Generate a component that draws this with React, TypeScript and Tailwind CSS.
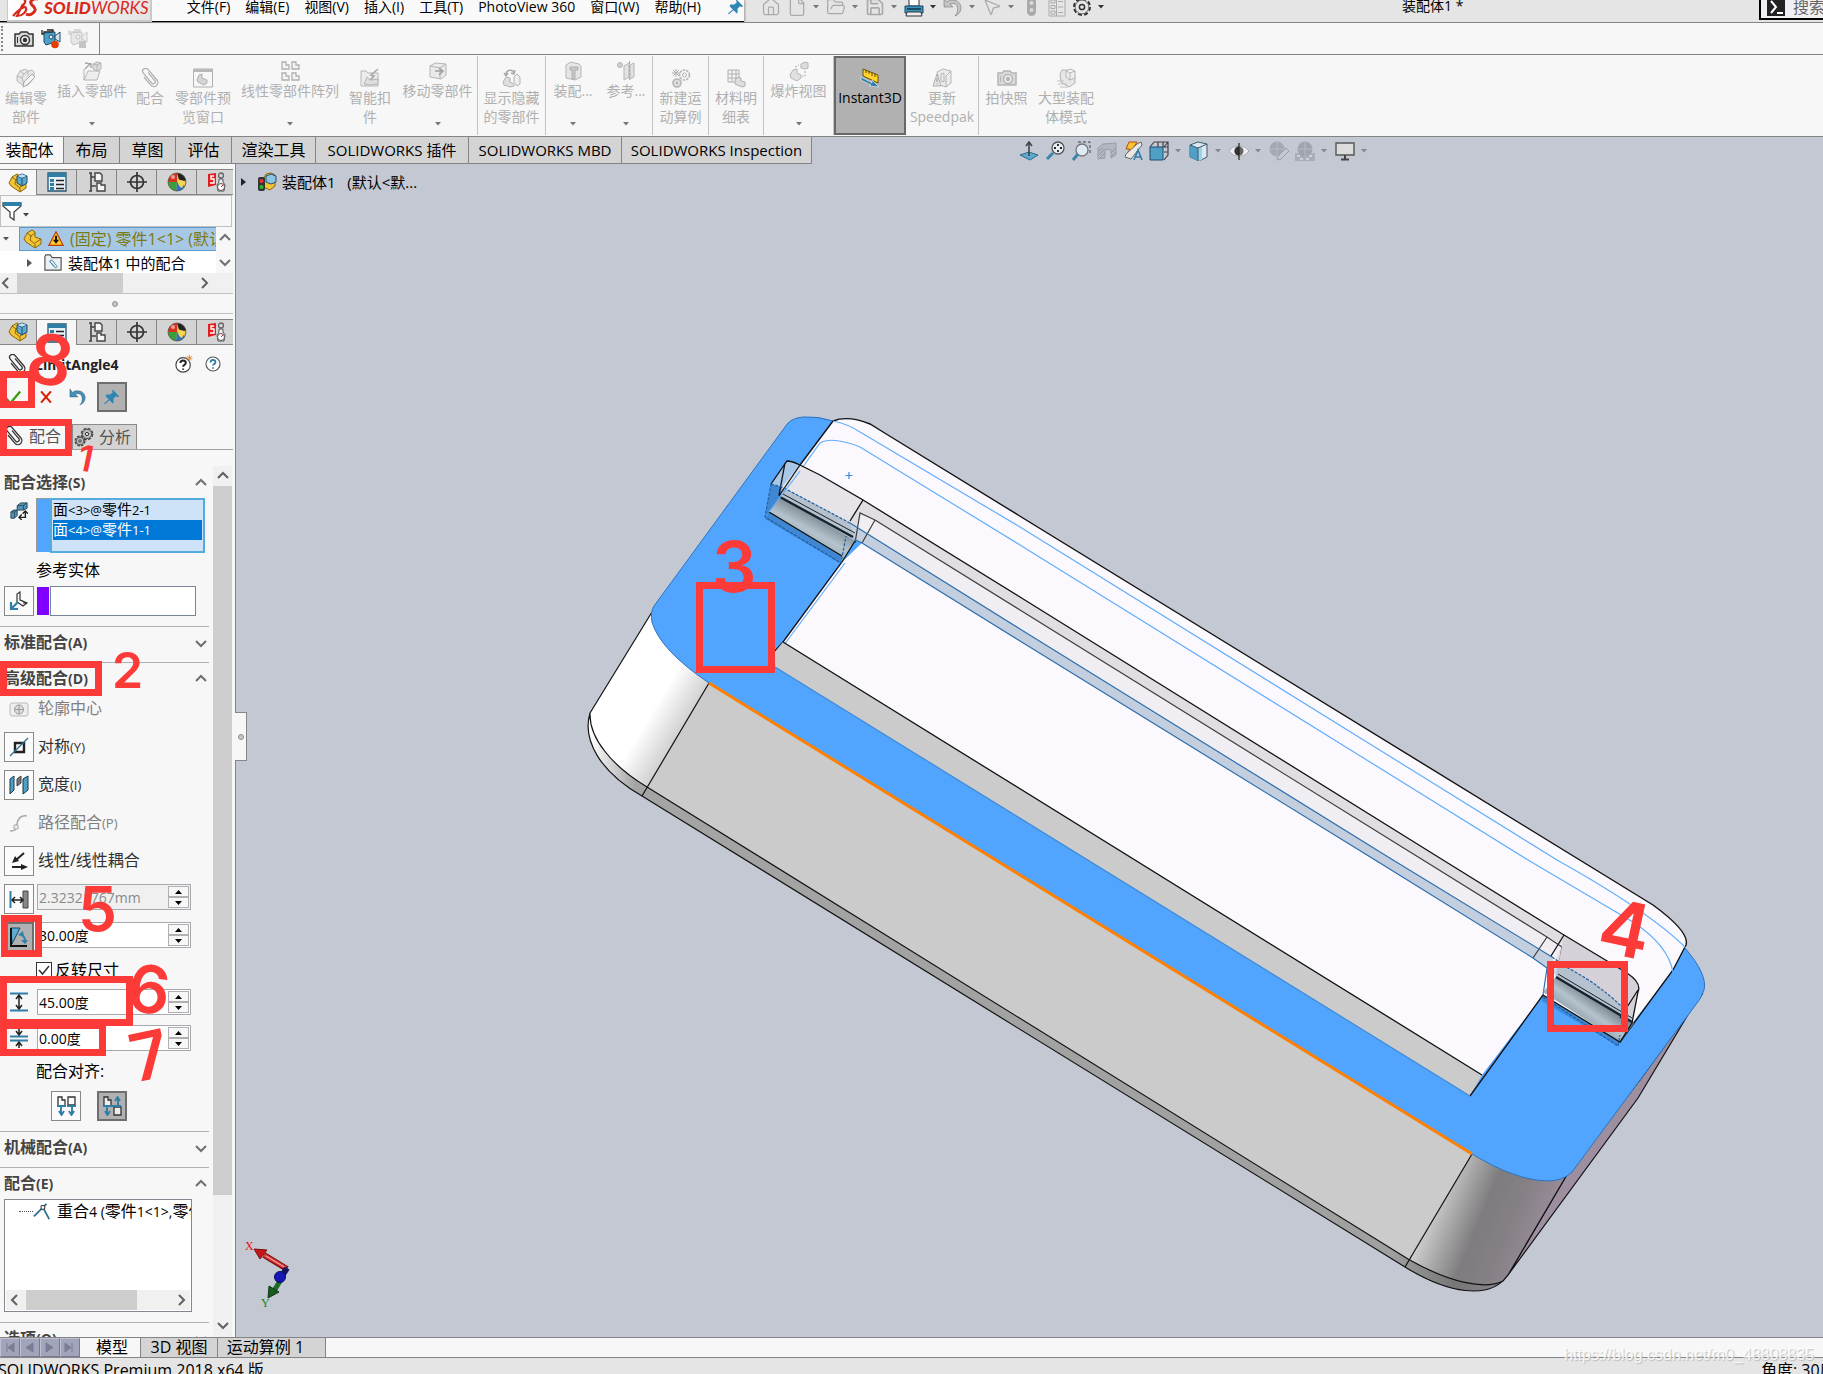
import React from 'react';
import { Home, File, FolderOpen, Save, MousePointer2 } from 'lucide-react';

type IconProps = { className?: string };

const Svg: React.FC<{ className?: string; children: React.ReactNode }> = ({ className = 'w-5 h-5', children }) => (
  <svg viewBox="0 0 20 20" className={`${className} shrink-0`} fill="none" aria-hidden="true">{children}</svg>
);

/* ---------- icons ---------- */

const Caret: React.FC<IconProps> = ({ className = 'text-[#888]' }) => (
  <svg viewBox="0 0 6 4" className={`w-[6px] h-[4px] shrink-0 ${className}`} aria-hidden="true"><path d="M0 0h6L3 3.5z" fill="currentColor" /></svg>
);

const Chevron: React.FC<{ dir: 'up' | 'down' | 'left' | 'right'; className?: string }> = ({ dir, className = 'text-[#707070]' }) => {
  const d = { up: 'M1 8l5-5 5 5', down: 'M1 4l5 5 5-5', left: 'M8 1L3 6l5 5', right: 'M4 1l5 5-5 5' }[dir];
  return <svg viewBox="0 0 12 12" className={`w-3 h-3 shrink-0 ${className}`} aria-hidden="true"><path d={d} stroke="currentColor" strokeWidth="2" fill="none" /></svg>;
};

const Clip: React.FC<IconProps> = ({ className }) => (
  <Svg className={className}>
    <g transform="rotate(-40 10 10)">
      <path d="M6 6v10a4 4 0 0 0 8 0V2a3 3 0 0 0-6 0v13a2 2 0 0 0 4 0V5" stroke="currentColor" strokeWidth="1.3" strokeLinecap="round" />
    </g>
  </Svg>
);

const YellowPart: React.FC<IconProps & { blue?: boolean }> = ({ className, blue }) => (
  <Svg className={className}>
    <path d="M1 10l3-6 5-3 3 2v5l6 2v5l-6 4-9-6z" fill="#f3c434" stroke="#8a6510" />
    <path d="M4 4l4 3-1 4 5 4v4M12 14l6-4M8 7l4-3" stroke="#8a6510" />
    {blue && <><path d="M9 3l5-2 5 2v7l-5 3-5-3z" fill="#5fa8cf" stroke="#1f4f6e" /><path d="M9 3l5 2 5-2M14 5v8" stroke="#1f4f6e" /><path d="M9.5 3L14 1.3 18.500 3 14 4.7z" fill="#c2e2f2" /></>}
  </Svg>
);

const Camera: React.FC<IconProps> = ({ className }) => (
  <Svg className={className}>
    <path d="M1 5h4l2-2h6l2 2h4v12H1z" fill="#d9d9d9" stroke="currentColor" strokeWidth="1.5" />
    <circle cx="11" cy="11" r="4.5" fill="#eee" stroke="currentColor" strokeWidth="1.5" />
    <circle cx="11" cy="11" r="2.2" fill="currentColor" />
    <path d="M3.5 8v6" stroke="currentColor" />
  </Svg>
);

const VideoCam: React.FC<{ live?: boolean }> = ({ live }) => (
  <Svg>
    <path d="M1 1v4h2V3h9V1H6" stroke={live ? '#222' : '#ccc'} strokeWidth="1.3" />
    <path d="M3 4l11-1v10l-9 3-2-3z" fill={live ? '#4c9fc8' : '#e6e6e6'} stroke={live ? '#1c4a63' : '#c8c8c8'} />
    <path d="M14 7l5-4v10l-5-3z" fill={live ? '#cfe3ee' : '#eee'} stroke={live ? '#1c4a63' : '#c8c8c8'} />
    <circle cx="10" cy="8" r="2" fill={live ? '#e6f2f8' : '#f4f4f4'} stroke={live ? '#1c4a63' : '#c0c0c0'} />
    {live ? <circle cx="14" cy="15.5" r="3.8" fill="#e63c00" /> : <path d="M11 12h7v7h-7z" fill="#c4c4c4" />}
  </Svg>
);

const InsertPart: React.FC = () => (
  <Svg>
    <path d="M2 8v11h13l3-9H6l-4 9" fill="#eee" stroke="#b5b5b5" />
    <path d="M3 2l6 1M3 8l5-5M9 2v5" stroke="#a5a5a5" strokeWidth="1.4" />
    <path d="M11 3l4-2 4 1v6l-4 2-4-2z" fill="#dcdcdc" stroke="#b5b5b5" /><path d="M11 3l4 1 4-2M15 4v6" stroke="#b5b5b5" />
  </Svg>
);

const EditPart: React.FC = () => (
  <Svg>
    <path d="M1 8l3-5 5-2 3 2 4-1 2 2v6l-6 7-4 1-7-5z" fill="#e6e6e6" stroke="#b8b8b8" />
    <path d="M1 8l5 2 2 7M4 3l4 3-2 4M12 3v5M8 6l4-3" stroke="#b8b8b8" />
    <path d="M7 19l1-5 8-8 3 3-8 8z" fill="#f4f4f4" stroke="#a8a8a8" />
  </Svg>
);

const PreviewWin: React.FC = () => (
  <Svg>
    <path d="M.5 1h19v18H.5z" stroke="#b0b0b0" /><path d="M.5 1h19v3H.5z" fill="#b8b8b8" />
    <path d="M4 12l2-5 3-1v4l5 2v3l-3 2-6-3z" fill="#d5d5d5" stroke="#b0b0b0" />
  </Svg>
);

const Pattern: React.FC = () => (
  <Svg>
    {['M2 1h4v3h3v4H2z', 'M12 1h4v3h3v4h-7z', 'M2 12h4v3h3v4H2z', 'M12 12h4v3h3v4h-7z'].map((d) => <path key={d} d={d} fill="#f4f4f4" stroke="#b0b0b0" strokeWidth="1.3" />)}
  </Svg>
);

const SmartFastener: React.FC = () => (
  <Svg>
    <path d="M1 3h5l2 2h10v13H1z" fill="#ececec" stroke="#b5b5b5" /><path d="M18 1l-7 6 3 1-6 6" stroke="#a8a8a8" strokeWidth="1.6" /><path d="M4 16l3-7 3 3 8-1v5l-8 1z" fill="#ddd" stroke="#b5b5b5" />
  </Svg>
);

const MovePart: React.FC = () => (
  <Svg>
    <path d="M2 5l5-3 11 1v11l-5 4-11-2z" fill="#eaeaea" stroke="#b5b5b5" /><path d="M2 5l10 2v11M12 7l6-4" stroke="#b5b5b5" /><path d="M7 10h7M11 7l4 3-4 4" stroke="#a0a0a0" strokeWidth="1.5" />
  </Svg>
);

const ShowHidden: React.FC = () => (
  <Svg>
    <path d="M4 7c0-6 7-6 8-2M9 5l3 1 1-4M4 8L2 5M4 8l2-3" stroke="#a8a8a8" strokeWidth="1.4" />
    <path d="M1 14l3-5 4 1v4l4 2v2l-4 1-6-2z" fill="#ddd" stroke="#b5b5b5" /><path d="M12 9l3-3 3 3v7l-3 2-3-4z" fill="#eee" stroke="#b5b5b5" />
  </Svg>
);

const Feature: React.FC = () => (
  <Svg>
    <path d="M3 4l5-3 8 2 2 2v11l-6 3-9-2z" fill="#e6e6e6" stroke="#b5b5b5" /><path d="M7 6h8v3h-3v9H9V9H7z" fill="#c6c6c6" stroke="#b0b0b0" />
  </Svg>
);

const RefGeom: React.FC = () => (
  <Svg>
    <circle cx="4" cy="4" r="2.5" fill="#d0d0d0" stroke="#b5b5b5" /><path d="M8 5l5-3v14l-5 3zM14 4l4-2v14l-4 2z" fill="#e2e2e2" stroke="#b5b5b5" /><path d="M13.5 0v20" stroke="#aaa" strokeDasharray="3 1" />
  </Svg>
);

const Motion: React.FC = () => (
  <Svg>
    <path d="M5 1v8M1 5h8M2 2l6 6M8 2L2 8" stroke="#b0b0b0" /><circle cx="13.5" cy="7" r="5" stroke="#b5b5b5" strokeWidth="1.6" strokeDasharray="2.5 1" fill="#f4f4f4" /><circle cx="13.5" cy="7" r="2" stroke="#b5b5b5" />
    <circle cx="6" cy="15" r="4" stroke="#b5b5b5" strokeWidth="1.6" fill="#ddd" /><circle cx="6" cy="15" r="1.2" fill="#b5b5b5" />
  </Svg>
);

const Bom: React.FC = () => (
  <Svg>
    <path d="M2 2h11v12H2zM2 6h11M2 10h11M6 2v12M10 2v12" fill="#f4f4f4" stroke="#b0b0b0" /><path d="M9 12l3-3 3 1v3l4 1v4l-3 1-7-3z" fill="#ddd" stroke="#b0b0b0" />
  </Svg>
);

const Explode: React.FC = () => (
  <Svg>
    <path d="M1 14l3-5 4-1v4l4 2v3l-4 3-6-3z" fill="#e0e0e0" stroke="#b5b5b5" /><path d="M12 3l4-2 3 1v5l-3 1-4-1z" fill="#ddd" stroke="#b5b5b5" /><path d="M16 10v5h-3M6 6l4-2" stroke="#a5a5a5" strokeDasharray="2 1.5" />
  </Svg>
);

const Ruler3D: React.FC = () => (
  <Svg>
    <path d="M3 1l15 6v8L3 8z" fill="#ffd52e" stroke="#6b5000" /><path d="M6 2v3M9 3v3M12 4.5V8M15 6v3" stroke="#5a4400" />
    <path d="M1 9l11 6v-3l7 7-10-1 2-1L1 12z" fill="#2f7fa8" stroke="#e8f4fa" strokeWidth=".6" />
  </Svg>
);

const Speedpak: React.FC = () => (
  <Svg>
    <path d="M5 4l6-3 8 2v12l-5 4-6-2z" fill="#ececec" stroke="#b5b5b5" /><path d="M9 6l3-1v9l-3-1zM14 8v11M14 8l5-5" stroke="#b5b5b5" /><path d="M1 18l4-12 4 12z" fill="#e5e5e5" stroke="#b0b0b0" /><path d="M5 10v4M5 15.5v1" stroke="#999" />
  </Svg>
);

const LargeAsm: React.FC = () => (
  <Svg>
    <path d="M4 6l2-4h5v6l3 2 5-2v7l-6 4-8-5z" fill="#e6e6e6" stroke="#b5b5b5" /><path d="M10 3l4-2 5 2v7l-5 2-4-3zM10 3l4 2 5-2M14 5v7" fill="#eee" stroke="#b5b5b5" /><path d="M1 13h7M2 16h9M4 19h8" stroke="#c0c0c0" />
  </Svg>
);

const Pin: React.FC<IconProps> = ({ className }) => (
  <Svg className={className}><path d="M11 1l8 8-2 1-2-1-3 3v5l-1 1-4-4-6 5-1-1 6-5-4-4 1-2h5l3-3-1-2z" fill="#2f86b5" /></Svg>
);

const Undo: React.FC<IconProps> = ({ className }) => (
  <Svg className={className}><path d="M1 1v9h9L7 7c6-2 9 2 7 9l-2 3c9-3 8-17-4-16-2 0-3 1-4 2z" fill="currentColor" stroke="#00000055" strokeWidth=".8" /></Svg>
);

const Printer: React.FC = () => (
  <Svg><path d="M5 0h10v9H5z" fill="#fff" stroke="#333" /><path d="M1 9h18v7H1z" fill="#3d94bf" stroke="#15465f" /><path d="M3 15h14l1 4H2z" fill="#eee" stroke="#333" /><path d="M3 12h14" stroke="#0f3448" strokeWidth="1.5" /></Svg>
);

const Lights: React.FC = () => (
  <Svg><rect x="6" y="0" width="9" height="19" rx="4.5" fill="#a9a9a9" /><circle cx="10.5" cy="6" r="2" fill="#d9d9d9" /><circle cx="10.5" cy="13" r="2" fill="#d9d9d9" /></Svg>
);

const ListIcon: React.FC = () => (
  <Svg><path d="M2 0h16v19H2z" stroke="#aaa" /><path d="M4 3h4v3H4zM4 8.5h4v3H4zM4 14h4v3H4zM11 4.5h5M11 10h5M11 15.5h5M9.5 0v19" stroke="#aaa" /></Svg>
);

const Gear: React.FC = () => (
  <Svg><circle cx="10" cy="10" r="8" stroke="#333" strokeWidth="2" strokeDasharray="4 2.28" /><circle cx="10" cy="10" r="6.8" fill="#e5e5e5" stroke="#444" strokeWidth=".7" /><circle cx="10" cy="10" r="2.6" stroke="#333" strokeWidth="1.5" /></Svg>
);

const Gears: React.FC = () => (
  <Svg>
    <circle cx="13" cy="7" r="5.6" stroke="#444" strokeWidth="1.4" strokeDasharray="3 1.4" /><circle cx="13" cy="7" r="4.6" fill="#bbb" stroke="#555" /><circle cx="13" cy="7" r="1.6" fill="#eee" stroke="#333" />
    <circle cx="6" cy="14" r="4.8" stroke="#444" strokeWidth="1.4" strokeDasharray="2.6 1.2" /><circle cx="6" cy="14" r="3.8" fill="#bbb" stroke="#555" /><circle cx="6" cy="14" r="1.2" fill="#eee" stroke="#333" />
  </Svg>
);

const panelIcons = [
  <YellowPart key="fm" blue />,
  <Svg key="pm"><path d="M1 1h18v18H1z" fill="#e8f1f6" stroke="#24566f" strokeWidth="1.3" /><path d="M1 1h18v4H1z" fill="#2f7ea6" /><path d="M3 7h4v3H3zM3 11h4v3H3zM3 15h4v3H3z" fill="#2f7ea6" /><path d="M9 8.5h8M9 12.5h8M9 16.5h8" stroke="#222" strokeWidth="1.4" /></Svg>,
  <Svg key="cm"><path d="M2 1h3M4 1v18M2 19h3M4 5h5M4 14h5" stroke="#444" strokeWidth="1.6" /><path d="M8 1h5l2 2v6H8zM10 11h4v2h4v6h-8z" fill="#f5f5f5" stroke="#444" strokeWidth="1.4" /></Svg>,
  <Svg key="dx"><circle cx="10" cy="10" r="6.5" stroke="#333" strokeWidth="1.7" /><path d="M10 0v20M0 10h20" stroke="#333" strokeWidth="1.7" /></Svg>,
  <Svg key="dm"><circle cx="10" cy="10" r="9" fill="#f2c62c" /><path d="M10 10V1a9 9 0 0 0-9 9z" fill="#d8321f" /><path d="M10 10H1a9 9 0 0 0 8 9z" fill="#3a9e3a" /><path d="M9 19l1-9 8 4a9 9 0 0 1-9 5z" fill="#2e74c4" /><path d="M10 1c5 0 9 4 9 8l-7-1z" fill="#222" /><path d="M11 7l7 3-3 6c-3-1-5-5-4-9z" fill="#f4d55a" /><circle cx="10" cy="10" r="9" stroke="#555" strokeWidth=".8" /><circle cx="6" cy="5" r="2" fill="#ffffff88" /></Svg>,
  <Svg key="in"><path d="M1 2l8-1v12l-8 2z" fill="#e02020" /><path d="M7 4H4v3h3v4H3" stroke="#fff" strokeWidth="1.4" /><circle cx="14" cy="3.5" r="2.5" stroke="#666" strokeWidth="1.3" /><path d="M12 7h4v3l2 3-1 6h-6l-1-6 2-3z" fill="#eee" stroke="#555" /><circle cx="14" cy="15" r="3.5" fill="#fff" stroke="#555" /><path d="M14 15l2-2" stroke="#c22" /></Svg>,
];

/* ---------- top of the window ---------- */

const menus = ['文件(F)', '编辑(E)', '视图(V)', '插入(I)', '工具(T)', 'PhotoView 360', '窗口(W)', '帮助(H)'];

const TitleBar: React.FC = () => (
  <header className="flex h-[23px] shrink-0 items-stretch border-b border-[#848484] bg-[#e5e5e5] text-[14px]">
    <div className="flex w-[744px] items-stretch border-b border-black bg-[#f9f9f9] shadow-[1px_0_2px_#999]">
      <div className="w-[7px] bg-[#e5e5e5]" />
      <div className="flex h-[22px] w-[145px] items-center gap-1 border-r-2 border-b-2 border-l border-[#c8c8c8] bg-linear-to-r from-white to-[#e4e4e4] pb-1 pl-1 text-[#da291c]">
        <svg viewBox="0 0 28 20" className="h-5 w-7 shrink-0" fill="none" stroke="currentColor" strokeWidth="2.2" aria-hidden="true">
          <path d="M6 1h5c4 1 2 5-1 7M11 6L5 18c5 0 10-4 9-8-1-3-8 2-13 8" />
          <path d="M26 1c-6-1-9 3-6 6 4 3 4 6 1 8-2 2-5 2-7 1" strokeWidth="3" />
        </svg>
        <span className="font-['Lato',sans-serif] text-[17px] italic leading-5"><b className="font-black">SOLID</b>WORKS</span>
      </div>
      <nav className="ml-[35px] flex items-center gap-[15px] whitespace-nowrap pb-2 text-black">
        {menus.map((m) => <button key={m} className="leading-4">{m}</button>)}
        <Pin className="ml-[12px] h-4 w-4" />
      </nav>
    </div>
    <div className="ml-[17px] flex items-center pb-2 text-[#aaa]">
      <Home className="w-5 h-5" strokeWidth={1.5} />
      <File className="ml-[6px] w-5 h-5" strokeWidth={1.5} /><Caret className="ml-[6px] text-[#777]" />
      <FolderOpen className="ml-[7px] w-5 h-5" strokeWidth={1.5} /><Caret className="ml-[6px] text-[#777]" />
      <Save className="ml-[7px] w-5 h-5" strokeWidth={2} /><Caret className="ml-[6px] text-[#777]" />
      <span className="ml-[7px]"><Printer /></span><Caret className="ml-[6px] text-[#333]" />
      <Undo className="ml-[7px] w-5 h-5 text-[#c4c4c4]" /><Caret className="ml-[6px] text-[#777]" />
      <MousePointer2 className="ml-[7px] w-5 h-5" strokeWidth={1.5} /><Caret className="ml-[6px] text-[#777]" />
      <span className="ml-[7px]"><Lights /></span>
      <span className="ml-[6px]"><ListIcon /></span>
      <span className="ml-[5px]"><Gear /></span><Caret className="ml-[6px] text-[#333]" />
    </div>
    <h1 className="ml-[298px] whitespace-pre leading-3 text-black">装配体1 *</h1>
    <div className="ml-auto flex h-5 w-[64px] items-center gap-2 overflow-hidden border-b-2 border-l-2 border-black bg-[#f0f0f4] pb-1 pl-[6px]">
      <svg viewBox="0 0 18 18" className="h-[18px] w-[18px] shrink-0" aria-hidden="true"><path d="M0 0h18v18H0z" fill="#222" /><path d="M4 3l5 6-5 6M10 15h6" stroke="#fff" strokeWidth="2" fill="none" /></svg>
      <input aria-label="搜索" placeholder="搜索" className="w-12 shrink-0 bg-transparent text-[16px] leading-4 placeholder:text-[#666]" />
    </div>
  </header>
);

const QuickBar: React.FC = () => (
  <div className="flex h-8 shrink-0 items-stretch border-b border-[#848484]">
    <div className="my-[3px] w-[3px] border-r-2 border-dotted border-[#888]" />
    <div className="flex w-[97px] items-center gap-[7px] border-r border-[#848484] pl-[11px]">
      <button aria-label="拍照"><Camera className="w-5 h-5 text-[#333]" /></button>
      <button aria-label="录制"><VideoCam live /></button>
      <button aria-label="停止录制"><VideoCam /></button>
    </div>
  </div>
);

type Cmd = { icon: React.ReactNode; lines: string[]; w: string; drop?: boolean; sep?: boolean; active?: boolean };

const commands: Cmd[] = [
  { icon: <EditPart />, lines: ['编辑零', '部件'], w: 'w-[52px]' },
  { icon: <InsertPart />, lines: ['插入零部件'], w: 'w-[80px]', drop: true },
  { icon: <Clip className="w-5 h-5 text-[#b0b0b0]" />, lines: ['配合'], w: 'w-[36px]' },
  { icon: <PreviewWin />, lines: ['零部件预', '览窗口'], w: 'w-[70px]' },
  { icon: <Pattern />, lines: ['线性零部件阵列'], w: 'w-[104px]', drop: true },
  { icon: <SmartFastener />, lines: ['智能扣', '件'], w: 'w-[56px]' },
  { icon: <MovePart />, lines: ['移动零部件'], w: 'w-[80px]', drop: true, sep: true },
  { icon: <ShowHidden />, lines: ['显示隐藏', '的零部件'], w: 'w-[68px]', sep: true },
  { icon: <Feature />, lines: ['装配...'], w: 'w-[54px]', drop: true },
  { icon: <RefGeom />, lines: ['参考...'], w: 'w-[53px]', drop: true, sep: true },
  { icon: <Motion />, lines: ['新建运', '动算例'], w: 'w-[56px]', sep: true },
  { icon: <Bom />, lines: ['材料明', '细表'], w: 'w-[55px]', sep: true },
  { icon: <Explode />, lines: ['爆炸视图'], w: 'w-[70px]', drop: true, sep: true },
  { icon: <Ruler3D />, lines: ['Instant3D'], w: 'w-[72px]', active: true },
  { icon: <Speedpak />, lines: ['更新', 'Speedpak'], w: 'w-[73px]', sep: true },
  { icon: <Camera className="w-5 h-5 text-[#b5b5b5]" />, lines: ['拍快照'], w: 'w-[55px]' },
  { icon: <LargeAsm />, lines: ['大型装配', '体模式'], w: 'w-[64px]' },
];

const Ribbon: React.FC = () => (
  <div className="flex h-[81px] shrink-0 items-stretch py-px">
    {commands.map((c) => (
      <div key={c.lines[0]} className={`${c.w} ${c.sep ? 'border-r border-[#c4c4c4]' : ''} flex shrink-0`}>
        <button className={`flex flex-1 flex-col items-center whitespace-nowrap text-[14px] leading-[19px] ${c.active ? 'border-2 border-[#686868] bg-[#b1b1b1] text-black' : 'text-[#b0b0b0]'} ${c.drop ? 'pt-[5px]' : c.active ? 'pt-[10px]' : 'pt-[12px]'}`}>
          {c.icon}
          {c.lines.map((l) => <span key={l}>{l}</span>)}
          {c.drop && <Caret className="mt-auto mb-[9px] text-[#777]" />}
        </button>
      </div>
    ))}
  </div>
);

const tabs = [
  ['装配体', 'w-[64px] pr-1'], ['布局', 'w-[56px]'], ['草图', 'w-[56px]'], ['评估', 'w-[56px]'], ['渲染工具', 'w-[84px]'],
  ['SOLIDWORKS 插件', 'w-[153px]'], ['SOLIDWORKS MBD', 'w-[153px]'], ['SOLIDWORKS Inspection', 'w-[190px]'],
];

const HeadsUp: React.FC = () => (
  <div className="ml-[207px] flex items-center gap-[6px] pt-px text-[#888]">
    <Svg><path d="M1 14l9-3 9 3-8 5z" fill="#5ea9cc" stroke="#2d6c8c" /><path d="M10 1v14M7 5l3-4 3 4" stroke="#444" strokeWidth="1.6" /></Svg>
    <Svg><circle cx="13" cy="7" r="6" fill="#e6eef4" stroke="#555" strokeWidth="1.3" /><path d="M13 3v2M13 9v2M9 7h2M15 7h2" stroke="#222" strokeWidth="1.8" /><path d="M8 12l-6 6" stroke="#3a86ab" strokeWidth="3" /></Svg>
    <Svg><path d="M7 1h12v13" stroke="#444" strokeDasharray="3 2" /><circle cx="11" cy="9" r="6" fill="#dfeaf2" stroke="#777" strokeWidth="1.3" /><path d="M7 13l-5 6" stroke="#3a86ab" strokeWidth="3" /></Svg>
    <Svg><path d="M1 7l5-4 13-1v12l-5 3V9L8 8v9l-7 1z" fill="#b3b7c0" stroke="#9a9ea8" /><path d="M2 10l4-3M2 14l5-5M3 17l5-5M14 12l5-5M14 16l5-5" stroke="#92969f" /></Svg>
    <Svg><path d="M6 1h8l-3 5h4L3 14l4-6H3z" fill="#ffc531" stroke="#b34a10" /><path d="M14 3l4-2 1 3L8 18l-6-2 1-3z" fill="#e8e8e8" stroke="#666" /><path d="M11 19l4-10 4 10M12.5 16h5" stroke="#2f7fa8" strokeWidth="1.6" /></Svg>
    <Svg><path d="M5 1h14v13l-4 5M9 1v5M14 1v5M19 6h-5M19 11h-4M15 6l4-5M1 6l4-5" stroke="#444" strokeWidth="1.2" /><path d="M1 6h13v13H1z" fill="#4f9fc6" stroke="#1f4f6e" /></Svg>
    <Caret />
    <Svg className="ml-[2px] h-5 w-5"><path d="M1 4l8-3 9 2v13l-8 4-9-4z" fill="#dce8ef" stroke="#3c5a6a" /><path d="M1 4l8 3v13l-8-4z" fill="#4f9fc6" /><path d="M9 7l4-2v14l-4 1z" fill="#9ed0e8" /><path d="M9 7v13M9 7l9-4M1 4l8 3" stroke="#3c5a6a" /></Svg>
    <Caret />
    <Svg className="ml-[2px] h-5 w-5"><path d="M0 10c5-7 15-7 20 0-5 7-15 7-20 0z" fill="#eceef2" stroke="#aaa" /><circle cx="10" cy="10" r="4.5" fill="#666" /><path d="M10 5.500a4.500 4.500 0 0 0 0 9z" fill="#333" /><path d="M10 2v17" stroke="#222" strokeWidth="1.2" /></Svg>
    <Caret />
    <Svg className="ml-[2px] h-5 w-5"><circle cx="8" cy="8" r="7.5" fill="#a4a8b2" /><path d="M8 0v16M1 8h14" stroke="#b6bac4" /><path d="M8 19l1-4 8-8 3 3-8 8z" fill="#c4c8d3" stroke="#999da7" /></Svg>
    <Svg><path d="M0 12h20v8H0z" fill="#a9adb7" /><path d="M2 14h3v2H2zM14 14h3v2h-3zM5 17h3v2H5zM11 17h3v2h-3z" fill="#cdd1da" /><circle cx="10" cy="8" r="7.5" fill="#a0a4ae" /><path d="M10 0v16M3 8h14" stroke="#b6bac4" /></Svg>
    <Caret />
    <Svg className="ml-[2px] h-5 w-5"><path d="M1 2h18v12H1z" fill="#dcdcdc" stroke="#555" strokeWidth="1.4" /><path d="M10 14v4M6 18.5h8" stroke="#444" strokeWidth="2" /></Svg>
    <Caret />
  </div>
);

const TabRow: React.FC = () => (
  <div className="flex h-7 shrink-0 border-t border-[#848484] bg-[#c4c8d3]">
    <div className="flex text-[16px] text-black" role="tablist">
      {tabs.map(([t, w], i) => (
        <button key={t} role="tab" aria-selected={i === 0} className={`${w} whitespace-nowrap border-r border-b border-[#848484] leading-6 ${i === 0 ? 'bg-[#f7f7f7]' : 'bg-[#d4d4d4]'} ${i > 4 ? 'text-[15px]' : ''}`}>{t}</button>
      ))}
    </div>
    <HeadsUp />
  </div>
);

/* ---------- side panel ---------- */

const PanelTabs: React.FC<{ active: number }> = ({ active }) => (
  <div className="flex h-[26px] w-[233px] shrink-0 border-t border-[#868686]">
    {panelIcons.map((icon, i) => (
      <button key={i} aria-label={`面板 ${i + 1}`} className={`flex shrink-0 items-center justify-center ${i === 0 ? 'w-[37px]' : i === 5 ? 'w-[36px] pl-[3px]' : 'w-[40px]'} ${i < 5 ? 'border-r border-[#868686]' : ''} ${i === active ? 'bg-[#f7f7f7]' : 'border-b border-[#868686] bg-[#d4d4d4]'}`}>{icon}</button>
    ))}
  </div>
);

const HScroll: React.FC<{ pad: string; thumb: string }> = ({ pad, thumb }) => (
  <div className={`flex h-5 items-center bg-[#f0f0f0] ${pad}`}>
    <Chevron dir="left" className="text-[#606060]" />
    <div className={`ml-[5px] h-full bg-[#cdcdcd] ${thumb}`} />
    <Chevron dir="right" className="ml-auto text-[#606060]" />
  </div>
);

const FeatureTree: React.FC = () => (
  <div className="shrink-0">
    <div className="flex h-8 w-[232px] items-center gap-px border border-[#c0c0c0] pl-px">
      <Svg><path d="M1 2h18v3l-7 6v8l-4-3v-5L1 5z" fill="#fff" stroke="#444" strokeWidth="1.3" /><path d="M1 1h18v4H1z" fill="#2f7ea6" /></Svg>
      <Caret className="mt-2 text-[#444]" />
    </div>
    <div className="flex h-[46px]">
      <div className="w-[216px] overflow-hidden bg-white">
        <div className="flex h-6 items-center bg-[#f7f7f7]">
          <Caret className="mx-[3px] text-[#555]" />
          <div className="ml-[7px] flex h-6 flex-1 items-center gap-1 overflow-hidden whitespace-nowrap border border-r-0 border-[#5a9bd0] bg-[#a7c8e4] pl-[3px] text-[16px] text-[#7d7a16]">
            <YellowPart />
            <Svg className="ml-px h-4 w-4"><path d="M10 1l9 17H1z" fill="#ffc91f" stroke="#c03a10" strokeWidth="1.5" /><path d="M10 6v6" stroke="#111" strokeWidth="2.4" /><path d="M6 11h8l-4 5z" fill="#111" /></Svg>
            <span className="ml-[2px]">(固定) 零件1&lt;1&gt; (默认</span>
          </div>
        </div>
        <div className="flex h-[24px] items-center gap-[6px] whitespace-nowrap pl-[27px] text-[15px] text-black">
          <svg viewBox="0 0 5 8" className="h-2 w-[5px]" aria-hidden="true"><path d="M0 0l5 4-5 4z" fill="#555" /></svg>
          <Svg className="ml-[6px] h-[18px] w-[18px]"><path d="M1 3l1-2h5l2 3h10v14H1z" fill="#eef1f3" stroke="#555" strokeWidth="1.3" /><path d="M6 8l6 7c2 1 3-1 2-2L9 7c-2-1-3 1-2 2l5 5" stroke="#2f7fa8" /></Svg>
          <span>装配体1 中的配合</span>
        </div>
      </div>
      <div className="flex w-[17px] flex-col items-center justify-between py-[5px]">
        <Chevron dir="up" /><Chevron dir="down" />
      </div>
    </div>
    <div className="w-[233px] border-b border-[#c0c0c0]"><HScroll pad="pr-[23px]" thumb="w-[106px]" /></div>
    <div className="flex h-5 w-[233px] items-center justify-center border-b border-[#c0c0c0] pr-[3px]">
      <span className="h-[6px] w-[6px] rounded-full border border-[#909090] bg-[#c8c8c8]" />
    </div>
  </div>
);

const Section: React.FC<{ title: string; k: string; open?: boolean; first?: boolean; children?: React.ReactNode }> = ({ title, k, open, first, children }) => (
  <section className={first ? 'pt-[17px]' : 'border-t border-[#b0b0b0]'}>
    <button className={`flex w-full items-center justify-between pr-[2px] pl-1 font-bold text-[#444] ${open ? 'h-[31px]' : 'h-[35px] pb-1'}`}>
      <span className="text-[16px] leading-6">{title}<span className="text-[14px]">({k})</span></span>
      <Chevron dir={open ? 'up' : 'down'} />
    </button>
    {children}
  </section>
);

const IconBox: React.FC<{ label: string; pressed?: boolean; flat?: boolean; children: React.ReactNode }> = ({ label, pressed, flat, children }) => (
  <button aria-label={label} className={`flex h-[30px] w-[30px] shrink-0 items-center justify-center ${flat ? '' : pressed ? 'border-2 border-[#6e6e6e] bg-[#b1b1b1]' : 'border border-[#8a8a8a] bg-[#fbfbfb]'}`}>{children}</button>
);

const Spin: React.FC<{ label: string; value: string; disabled?: boolean }> = ({ label, value, disabled }) => (
  <div className={`flex h-[26px] w-[154px] items-center border border-[#a8a8b0] ${disabled ? 'bg-[#f0f0f0]' : 'bg-white'}`}>
    <input aria-label={label} defaultValue={value} disabled={disabled} className={`w-[130px] bg-transparent pl-px text-[14px] ${disabled ? 'text-[#8a8a8a]' : 'text-black'}`} />
    <span className="flex w-[21px] flex-col">
      {['M0 4l3.5-4L7 4z', 'M0 0l3.5 4L7 0z'].map((d) => (
        <button key={d} aria-label="调整" className="flex h-[11px] items-center justify-center border border-[#b0b0b0] bg-[#f7f7f7]"><svg viewBox="0 0 7 4" className="h-1 w-[7px]" aria-hidden="true"><path d={d} /></svg></button>
      ))}
    </span>
  </div>
);

const MateRow: React.FC<{ text: string; k?: string; off?: boolean; children: React.ReactNode }> = ({ text, k, off, children }) => (
  <div className={`flex h-[30px] items-center gap-1 text-[16px] ${off ? 'text-[#808080]' : 'text-[#333]'}`}>
    <IconBox label={text} flat={off}>{children}</IconBox>
    <span className="pb-[2px] leading-5">{text}{k && <span className="text-[13px]">({k})</span>}</span>
  </div>
);

const MateForm: React.FC = () => (
  <div className="w-[209px] shrink-0 overflow-hidden">
    <Section title="配合选择" k="S" open first>
      <div className="flex h-[55px] pl-[10px]">
        <Svg className="mt-1 h-[18px] w-[18px]"><path d="M8 4l4-3h7v6l-4 2H8zM1 11l3-2h4v6l-3 3H1z" fill="#4f93b5" stroke="#223f50" /><path d="M8 4h7l4-3M15 4v5M1 11h4l3-2M5 11v7" stroke="#223f50" strokeWidth=".8" /><path d="M10 17h8M13 14l-3 3 3 3M17 17v-6M14 13l3-3 3 3" stroke="#222" strokeWidth="1.5" /></Svg>
        <div className="ml-2 mb-px w-[14px] border-t border-l border-[#999] bg-[#52a5ff]" />
        <ul className="w-[155px] border-2 border-[#55aade] bg-[#cfe3f8] px-px text-[15px] leading-[18px] text-black">
          <li className="h-5">面<span className="text-[13px]">&lt;3&gt;@</span>零件<span className="text-[13px]">2-1</span></li>
          <li className="h-5 bg-[#0078d7] text-white">面<span className="text-[13px]">&lt;4&gt;@</span>零件<span className="text-[13px]">1-1</span></li>
        </ul>
      </div>
      <label htmlFor="ref" className="flex h-[33px] items-center pl-9 text-[16px] text-black">参考实体</label>
      <div className="mb-[10px] flex pl-1">
        <IconBox label="参考实体选择"><Svg><path d="M8 11V3l3-2v8l7 3-4 3-6-4zM11 9l3 1M14 12l4 0" stroke="#333" strokeWidth="1.2" /><path d="M9 11l-6 6M2 11v7h7" stroke="#2f7fa8" strokeWidth="2.2" /></Svg></IconBox>
        <div className="my-px ml-[3px] w-[12px] bg-[#8000ff]" />
        <input id="ref" className="ml-px h-[30px] w-[146px] border border-[#7a8499] bg-white" />
      </div>
    </Section>
    <Section title="标准配合" k="A" />
    <Section title="高级配合" k="D" open>
      <div className="flex flex-col gap-2 pl-1">
        <MateRow text="轮廓中心" off><Svg><rect x="1" y="4" width="18" height="13" rx="2" fill="#eee" stroke="#bbb" /><circle cx="10" cy="10.5" r="4.5" fill="#ddd" stroke="#999" /><path d="M10 6v9M5.5 10.5h9" stroke="#999" /></Svg></MateRow>
        <MateRow text="对称" k="Y"><Svg><path d="M6 6h9v9H6z" stroke="#222" strokeWidth="2.4" /><path d="M1 19L19 1" stroke="#2f6f92" strokeWidth="1.3" /></Svg></MateRow>
        <MateRow text="宽度" k="I"><Svg><path d="M1 4l4-3v14l-4 4zM14 4l5-3v14l-5 4z" fill="#4f9fc6" stroke="#17384a" /><path d="M8 4l4-3v7l-4 3z" fill="#777" stroke="#444" /></Svg></MateRow>
        <MateRow text="路径配合" k="P" off><Svg><path d="M1 18c6 0 6-1 7-7s4-9 10-8" stroke="#a8a8a8" strokeWidth="1.5" /><path d="M5 12h4v4H5z" fill="#eee" stroke="#a8a8a8" /></Svg></MateRow>
        <MateRow text="线性/线性耦合"><Svg><path d="M15 2L7 9" stroke="#222" strokeWidth="2" /><path d="M3 12l3-7 4 5zM12 13l7 3-7 3z" fill="#222" /><path d="M3 16h11" stroke="#222" strokeWidth="2" /></Svg></MateRow>
        <div className="flex gap-[3px]">
          <IconBox label="距离"><Svg><path d="M1.5 2v17" stroke="#2f7fa8" strokeWidth="2" /><path d="M14 2h5v17h-5z" fill="#888" stroke="#444" /><path d="M4 11h9M6 8l-3 3 3 3M11 8l3 3-3 3" stroke="#222" strokeWidth="1.5" /></Svg></IconBox>
          <Spin label="距离" value="2.32321767mm" disabled />
        </div>
        <div className="flex gap-[3px]">
          <IconBox label="角度" pressed><Svg><path d="M2 1h9L3 17z" fill="#5eaad0" stroke="#1c4a63" /><path d="M2 1v18h16" stroke="#111" strokeWidth="2" /><path d="M12 7c3 2 4 4 4 7" stroke="#2f7fa8" strokeWidth="2" /><path d="M9 8l5-4 1 6zM12 13h7l-3 4z" fill="#2f7fa8" /></Svg></IconBox>
          <Spin label="角度" value="30.00度" />
        </div>
      </div>
      <label className="mt-2 flex h-5 items-center gap-[3px] pl-9 text-[16px] text-black">
        <input type="checkbox" defaultChecked className="peer sr-only" />
        <span className="h-4 w-4 border border-[#333] bg-white"><svg viewBox="0 0 14 14" className="h-[14px] w-[14px]" aria-hidden="true"><path d="M2 7l3.5 4L12 3" stroke="#333" strokeWidth="1.5" fill="none" /></svg></span>
        反转尺寸
      </label>
      <div className="mt-[9px] flex items-center gap-[8px] pl-[9px]">
        <Svg><path d="M1 1.5h18M1 18.5h18" stroke="#2f7fa8" strokeWidth="2" /><path d="M10 4v12M7 7l3-4 3 4M7 13l3 4 3-4" stroke="#222" strokeWidth="1.5" /></Svg>
        <Spin label="最大值" value="45.00度" />
      </div>
      <div className="mt-[10px] flex items-center gap-[8px] pl-[9px]">
        <Svg><path d="M1 8.5h18M1 12.5h18" stroke="#2f7fa8" strokeWidth="2" /><path d="M10 1v5M7 3l3 4 3-4M10 20v-5M7 18l3-4 3 4" stroke="#222" strokeWidth="1.5" /></Svg>
        <Spin label="最小值" value="0.00度" />
      </div>
      <div className="flex h-10 items-center pl-9 text-[16px] text-black">配合对齐:</div>
      <div className="mb-[10px] flex gap-4 pl-[51px]">
        <IconBox label="同向对齐"><Svg><path d="M2 1h4v3h3v6H2zM12 1h7v8h-7z" stroke="#333" strokeWidth="1.3" /><path d="M1 10h9M11 10h9M5 10v8M16 10v8M3 15l2.5 4L8 15M13 15l2.5 4 2.5-4" stroke="#2f7fa8" strokeWidth="1.9" /></Svg></IconBox>
        <IconBox label="反向对齐" pressed><Svg><path d="M2 1h4v3h3v6H2zM12 11h7v8h-7z" fill="#eee" stroke="#333" strokeWidth="1.3" /><path d="M1 10h18M5 10v8M16 10V2M3 15l2.5 4L8 15M13 5l2.5-4L18 5" stroke="#2f7fa8" strokeWidth="1.9" /></Svg></IconBox>
      </div>
    </Section>
    <Section title="机械配合" k="A" />
    <Section title="配合" k="E" open>
      <div className="mb-[10px] ml-1 flex h-[113px] w-[188px] flex-col justify-between overflow-hidden border border-[#828790] bg-white p-px">
        <div className="flex h-[20px] items-center whitespace-nowrap pl-[13px] text-black">
          <span className="w-[14px] shrink-0 border-t border-dotted border-[#555]" />
          <Svg className="h-[18px] w-[18px]"><path d="M1 16L15 2M11 6l7 13" stroke="#2f6f92" strokeWidth="2" /><path d="M9 4h4v4H9z" fill="#fff" stroke="#222" /></Svg>
          <span className="ml-[6px] text-[16px]">重合<span className="text-[14px]">4 (</span>零件<span className="text-[14px]">1&lt;1&gt;,</span>零件</span>
        </div>
        <HScroll pad="px-[3px]" thumb="w-[111px]" />
      </div>
    </Section>
    <Section title="选项" k="O" />
  </div>
);

const PropertyManager: React.FC = () => (
  <>
    <div className="flex h-[37px] shrink-0 items-center pt-px pr-[14px] pl-[7px]">
      <Clip className="h-5 w-5 text-[#333]" />
      <h2 className="ml-[8px] text-[14px] font-bold text-[#222]">LimitAngle4</h2>
      <button aria-label="新增功能" className="ml-auto"><Svg className="h-[18px] w-[18px]"><circle cx="9" cy="11" r="8" fill="#fff" stroke="#444" strokeWidth="1.3" /><path d="M6 9c0-4 6-4 6 0 0 2-3 2-3 4M9 15v1.5" stroke="#222" strokeWidth="2.2" /><path d="M16 0v7M12.5 3.5h7M13.5 1l5 5M18.5 1l-5 5" stroke="#e08a2a" /></Svg></button>
      <button aria-label="帮助" className="ml-[12px]"><Svg className="h-[16px] w-[16px]"><circle cx="10" cy="10" r="8.8" fill="#fff" stroke="#555" strokeWidth="1.4" /><path d="M7 8c0-4 6-4 6 0 0 2-3 2-3 4M10 14v2" stroke="#2f7fa8" strokeWidth="2.4" /></Svg></button>
    </div>
    <div className="flex h-[30px] shrink-0 items-center pl-[4px]">
      <button aria-label="确定"><Svg className="h-[18px] w-[18px]"><path d="M2 11l5 6L18 4" stroke="#3a9d15" strokeWidth="2.6" /></Svg></button>
      <button aria-label="取消" className="ml-[17px]"><Svg className="h-[14px] w-[14px]"><path d="M3 2l14 16M17 2L3 18" stroke="#d81e05" strokeWidth="3" /></Svg></button>
      <button aria-label="撤消" className="ml-[16px]"><Undo className="h-[18px] w-[18px] text-[#4590b8]" /></button>
      <span className="ml-[10px]"><IconBox label="保持可见" pressed><Pin className="h-4 w-4" /></IconBox></span>
    </div>
    <div className="mt-3 flex h-[26px] w-[233px] shrink-0 border-b border-[#a0a0a0] text-[16px] leading-5 text-[#555]" role="tablist">
      <button role="tab" aria-selected="true" className="flex w-[72px] items-center gap-[5px] pl-1 pb-px"><Clip className="h-5 w-5 text-[#333]" />配合</button>
      <button role="tab" aria-selected="false" className="flex w-[65px] items-center gap-[5px] border border-b-0 border-[#8a8a8a] bg-[#d4d4d4] pl-px"><Gears />分析</button>
    </div>
    <div className="flex min-h-0 flex-1 overflow-hidden">
      <MateForm />
      <div className="mt-4 ml-1 flex w-[19px] flex-col items-center bg-[#f0f0f0]">
        <Chevron dir="up" className="my-1 text-[#606060]" />
        <div className="w-full flex-[710] bg-[#cdcdcd]" />
        <div className="flex-[120]" />
        <Chevron dir="down" className="mt-1 mb-[6px] text-[#606060]" />
      </div>
    </div>
  </>
);

/* ---------- graphics area ---------- */

const ModelView: React.FC = () => (
  <svg viewBox="236 164 1587 1173" preserveAspectRatio="xMinYMin meet" className="absolute inset-0 h-full w-full" fill="none" aria-label="模型视图">
    <defs>
      <linearGradient id="cornerL" x1="642" y1="728" x2="680" y2="751" gradientUnits="userSpaceOnUse"><stop offset="0" stopColor="#fff" /><stop offset="1" stopColor="#c4c4c4" /></linearGradient>
      <linearGradient id="cornerR" x1="1435" y1="1205" x2="1545" y2="1250" gradientUnits="userSpaceOnUse"><stop offset="0" stopColor="#cbcbcb" /><stop offset=".4" stopColor="#7e7c7e" /><stop offset=".65" stopColor="#858085" /><stop offset="1" stopColor="#9d8f9f" /></linearGradient>
      <linearGradient id="lip" x1="590" y1="0" x2="1500" y2="0" gradientUnits="userSpaceOnUse"><stop offset="0" stopColor="#fff" /><stop offset=".05" stopColor="#a4a4a4" /><stop offset=".88" stopColor="#a0a0a0" /><stop offset=".95" stopColor="#777" /><stop offset="1" stopColor="#8d838e" /></linearGradient>
      <linearGradient id="hinge" x1="812" y1="512" x2="796" y2="542" gradientUnits="userSpaceOnUse"><stop offset="0" stopColor="#79858f" /><stop offset=".5" stopColor="#b4c3cc" /><stop offset="1" stopColor="#9aacb8" /></linearGradient>
      <linearGradient id="hingeR" x1="1596" y1="999" x2="1580" y2="1022" gradientUnits="userSpaceOnUse"><stop offset="0" stopColor="#79858f" /><stop offset=".5" stopColor="#b4c3cc" /><stop offset="1" stopColor="#8fa0ac" /></linearGradient>
    </defs>

    {/* body: side, rounded corners, front face and bottom lip */}
    <path d="M1703 993L1695 1003L1638 1098L1508 1275L1568 1173L1640 1080Z" fill="#9d8f9f" stroke="#111" strokeWidth="1.2" />
    <path d="M1472 1154L1408 1259C1450 1283 1485 1290 1503 1281L1508 1275L1570 1170L1520 1150Z" fill="url(#cornerR)" />
    <path d="M1568 1173L1508 1275" stroke="#111" strokeWidth="1.2" />
    <path d="M652 612L590 713C586 730 600 760 647 787L709 683L690 650Z" fill="url(#cornerL)" />
    <path d="M709 683L647 787L1408 1259L1472 1154Z" fill="#cbcbcb" />
    <path d="M590 713C589 738 612 766 647 787L1408 1259C1450 1283 1485 1290 1503 1281L1508 1275C1490 1301 1447 1293 1405 1267L642 796C600 772 582 740 590 713Z" fill="url(#lip)" stroke="#111" strokeWidth="1.2" />
    <path d="M652 612L590 713M709 683L642 796M1472 1154L1405 1267" stroke="#111" strokeWidth="1.2" />

    {/* selected top face */}
    <path d="M785 427Q790 418 803 417Q818 416 833 421L863 500L1543 975L1685 948Q1708 975 1704 990L1700 999L1572 1172Q1563 1181 1547 1181Q1515 1180 1472 1154L709 683Q660 650 652 622Q650 612 654 606Z" fill="#52a5ff" />
    <path d="M833 421Q818 416 803 417Q790 418 785 427L654 606Q650 612 652 622Q660 650 709 683M1472 1154Q1515 1180 1547 1181Q1563 1181 1572 1172L1700 999L1704 990Q1708 975 1685 948" stroke="#2d73bd" />
    <path d="M709 683L1472 1154" stroke="#ff7f00" strokeWidth="3" />

    {/* lid */}
    <path d="M833 421Q848 415 870 424L883 432L1653 905Q1690 932 1686 945L1673 970L1618 1042L1543 995L1482 1075L783 642L842 562L862 543L863 500L800 465Z" fill="#fbf9fd" />
    <path d="M833 421Q848 415 870 424L883 432L1653 905Q1690 932 1686 945L1673 970L1620 1042" stroke="#111" strokeWidth="1.4" />
    <path d="M833 421L800 465" stroke="#111" strokeWidth="1.4" />
    <path d="M833 421Q848 424 860 432L1020 527L1557 860Q1650 912 1686 948" stroke="#62aefc" strokeWidth="1.2" />
    <path d="M800 471L820 443Q832 436 860 447L1020 545L1528 860L1633 922Q1668 945 1673 972" stroke="#62aefc" strokeWidth="1.2" />

    {/* long groove */}
    <path d="M863 500L1020 597L1443 860L1564 935L1557 977L1547 968L1533 958L1020 641L862 543L850 523Z" fill="#e0dee2" />
    <path d="M862 513L875 520L1020 610L1423 860L1562 945L1552 968L1393 870L1020 641L862 543L855 530Z" fill="#f0eef2" />
    <path d="M847 536L850 523L1020 629L1393 860L1552 957L1556 974L1533 958L1020 641L862 543Z" fill="#c3cede" />
    <path d="M875 520L1020 610L1423 860L1547 937L1562 947L1557 977M875 520L862 543M1547 937L1533 958M875 520L860 513L855 543" stroke="#3c3c3c" strokeWidth="1.2" />
    <path d="M850 523L1020 629L1393 860L1552 957M847 536L862 543L1020 641L1380 863L1533 958L1547 968L1543 995" stroke="#2d6fae" strokeWidth="1.2" />

    {/* left hinge slot */}
    <path d="M787 461L800 465L863 500L850 523L782 487L771 484Z" fill="#e6e4e8" />
    <path d="M787 461L800 465L782 487L771 484Z" fill="#a9c8e8" />
    <path d="M771 484L782 487L780 497L765 517Z" fill="#3f87d2" />
    <path d="M782 487L850 523L855 541L780 497Z" fill="#b7c0cd" />
    <path d="M780 497L855 541L842 562L769 512Z" fill="url(#hinge)" />
    <path d="M769 512L842 556L841 564L765 519Z" fill="#3f87d2" />
    <path d="M771 484L787 461Q792 461 800 465L820 475L863 500L850 521M785 463L779 495M800 465L779 496M863 500L1020 597L1443 860L1564 935M769 512L842 556M855 541L842 562L783 642L775 651" stroke="#111" strokeWidth="1.3" />
    <path d="M780 497L853 537" stroke="#17232c" strokeWidth="2.4" />
    <path d="M783 494L855 533" stroke="#17232c" />
    <path d="M771 484L765 517L841 563L846 536M771 484L782 487L850 523" stroke="#1d5fa5" strokeWidth="1.2" strokeDasharray="3 1.5" />
    <path d="M800 471L769 512M845 563L778 653" stroke="#62aefc" strokeWidth="1.2" />

    {/* right hinge slot */}
    <path d="M1564 935L1627 973Q1642 983 1638 992L1632 1023L1556 977Z" fill="#d6d0d8" />
    <path d="M1557 966L1568 968Q1600 985 1622 1007L1632 1023L1556 977Z" fill="#b5c1ce" />
    <path d="M1556 977L1634 1023L1620 1042L1543 992Z" fill="url(#hingeR)" />
    <path d="M1543 995L1620 1042L1618 1046L1542 1001Z" fill="#3f87d2" />
    <path d="M1564 935L1551 956M1564 935L1627 973Q1642 983 1638 992L1632 1023L1620 1042L1543 995M1638 990L1620 1018" stroke="#111" strokeWidth="1.3" />
    <path d="M1556 977L1632 1022" stroke="#17232c" strokeWidth="2.4" />
    <path d="M1558 974L1632 1018" stroke="#17232c" />
    <path d="M1552 957L1568 968Q1600 985 1622 1007M1543 997L1618 1046L1620 1035" stroke="#1d5fa5" strokeWidth="1.2" strokeDasharray="3 1.5" />

    {/* pocket */}
    <path d="M783 642L1482 1075L1470 1096L775 667L774 653Z" fill="#cbcbcb" />
    <path d="M783 642L1482 1075M1543 995L1470 1096" stroke="#111" strokeWidth="1.3" />
    <path d="M775 667L1470 1096" stroke="#3d8ad8" strokeWidth="1.2" />
    <path d="M849 472v7M845.5 475.5h7" stroke="#3d8ad8" strokeWidth="1.2" />

    {/* view triad */}
    <path d="M287 1269L264 1255" stroke="#7c0f0f" strokeWidth="6" />
    <path d="M286 1268L264 1255" stroke="#e03a3a" strokeWidth="3.5" />
    <path d="M286 1268L266 1256" stroke="#f4b0b0" />
    <path d="M254 1249L267 1250L260 1259Z" fill="#c51616" stroke="#7c0f0f" />
    <path d="M287 1268L278 1282" stroke="#14145c" strokeWidth="6" />
    <path d="M280 1281L274 1291" stroke="#1c6b26" strokeWidth="5" />
    <circle cx="280" cy="1277" r="5.5" fill="#1616b8" stroke="#0c0c66" />
    <path d="M268 1298L269 1286L279 1292Z" fill="#1a5a22" stroke="#0e3a14" />
    <text x="245" y="1250" fontSize="12" fill="#e81010" fontFamily="Liberation Serif, serif">X</text>
    <text x="261" y="1307" fontSize="12" fill="#108a18" fontFamily="Liberation Serif, serif">Y</text>
  </svg>
);

const Viewport: React.FC = () => (
  <main className="relative min-w-0 flex-1 bg-[#c4c8d3]">
    <ModelView />
    <div className="relative flex items-center gap-[5px] pt-[6px] pl-[5px] text-[15px] whitespace-pre text-black">
      <svg viewBox="0 0 5 8" className="h-2 w-[5px]" aria-hidden="true"><path d="M0 0l5 4-5 4z" fill="#222" /></svg>
      <Svg className="ml-[6px] h-5 w-5"><path d="M6 8l3-6 5-1 4 2v11l-5 4-7-3z" fill="#f3c434" stroke="#8a6510" /><path d="M9 4l5-2 5 2v6l-5 2-5-2z" fill="#8cc4e2" stroke="#1f4f6e" /><rect x="1" y="5" width="7" height="14" rx="2" fill="#333" /><circle cx="4.5" cy="9" r="2" fill="#e33" /><circle cx="4.5" cy="15" r="2" fill="#3b3" /></Svg>
      <span className="leading-6">装配体1   (默认&lt;默...</span>
    </div>
    <button aria-label="折叠面板" className="absolute top-[548px] -left-px flex h-[49px] w-[12px] items-center justify-center border border-l-0 border-[#868686] bg-[#f7f7f7]">
      <span className="h-[6px] w-[6px] rounded-full border border-[#909090] bg-[#c8c8c8]" />
    </button>
  </main>
);

/* ---------- bottom of the window ---------- */

const Footer: React.FC = () => (
  <footer className="shrink-0">
    <div className="flex h-[21px] border-t border-b border-[#848484] bg-[#f7f7f7] text-[16px] leading-[19px] text-black">
      <div className="flex w-20 bg-[#a2a4bb]">
        {['M5 2v9M12 2v9L6 6.5z', 'M11 2v9L4 6.5z', 'M4 2v9l7-4.5z', 'M10 2v9M3 2v9l6-4.5z'].map((d) => (
          <button key={d} aria-label="翻页" className="flex flex-1 items-center justify-center border border-t-[#c0c2d2] border-r-[#777a94] border-b-[#777a94] border-l-[#c0c2d2] pr-[3px]"><svg viewBox="0 0 14 13" className="h-[13px] w-[14px]" aria-hidden="true"><path d={d} fill="#7b7d95" stroke="#7b7d95" /></svg></button>
        ))}
      </div>
      <button className="w-[61px] border-r border-[#848484] pl-1">模型</button>
      <button className="w-[77px] border-r border-[#848484] bg-[#d4d4d4]">3D 视图</button>
      <button className="w-[108px] border-r border-[#848484] bg-[#d4d4d4] pr-3">运动算例 1</button>
    </div>
    <div className="flex h-4 justify-between overflow-hidden whitespace-nowrap bg-[#e5e5e5] text-[16px] leading-6 text-black">
      <span className="-ml-[2px]">SOLIDWORKS Premium 2018 x64 版</span>
      <span className="w-[62px] overflow-hidden">角度: 30度</span>
    </div>
  </footer>
);

/* ---------- red mark-up over the window ---------- */

const boxes = [
  'left-0 top-[371px] w-[35px] h-[37px]',
  'left-0 top-[419px] w-[72px] h-[37px]',
  'left-0 top-[661px] w-[102px] h-[35px]',
  'left-[1px] top-[915px] w-[41px] h-[42px]',
  'left-0 top-[976px] w-[133px] h-[50px]',
  'left-0 top-[1022px] w-[106px] h-[34px]',
  'left-[696px] top-[582px] w-[79px] h-[91px]',
  'left-[1547px] top-[961px] w-[81px] h-[71px]',
];

const digits = [
  ['1', 'left-[78px] top-[440px] text-[36px] leading-[36px] rotate-12'],
  ['2', 'left-[112px] top-[645px] text-[50px] leading-[50px]'],
  ['3', 'left-[712px] top-[532px] text-[70px] leading-[70px]'],
  ['4', 'left-[1600px] top-[890px] text-[76px] leading-[76px] rotate-12'],
  ['5', 'left-[78px] top-[878px] text-[62px] leading-[62px]'],
  ['6', 'left-[128px] top-[956px] text-[66px] leading-[66px] rotate-6'],
  ['7', 'left-[130px] top-[1022px] text-[66px] leading-[66px] -rotate-12'],
  ['8', 'left-[28px] top-[325px] text-[70px] leading-[70px] rotate-12'],
];

const Markup: React.FC = () => (
  <div className="pointer-events-none absolute inset-0 overflow-hidden">
    {boxes.map((b) => <div key={b} className={`absolute border-[7px] border-[#fc3a38] ${b}`} />)}
    {digits.map(([n, pos]) => <span key={n} className={`absolute font-['Inter',sans-serif] font-semibold text-[#fc3a38] ${pos}`}>{n}</span>)}
    <span className="absolute right-[9px] bottom-[9px] font-['Liberation_Sans',sans-serif] text-[16px] leading-5 text-white/80 [text-shadow:1px_1px_1px_#bbb]">https://blog.csdn.net/m0_48808835</span>
  </div>
);

export default function App() {
  return (
    <div className="relative flex h-screen flex-col overflow-hidden bg-[#f7f7f7] font-['Open_Sans','Noto_Sans_CJK_SC',sans-serif]">
      <TitleBar />
      <QuickBar />
      <Ribbon />
      <TabRow />
      <div className="flex min-h-0 flex-1">
        <aside className="flex w-[236px] shrink-0 flex-col overflow-hidden border-r border-[#868686] pt-[5px]">
          <PanelTabs active={0} />
          <FeatureTree />
          <div className="h-[5px] shrink-0" />
          <PanelTabs active={1} />
          <PropertyManager />
        </aside>
        <Viewport />
      </div>
      <Footer />
      <Markup />
    </div>
  );
}
